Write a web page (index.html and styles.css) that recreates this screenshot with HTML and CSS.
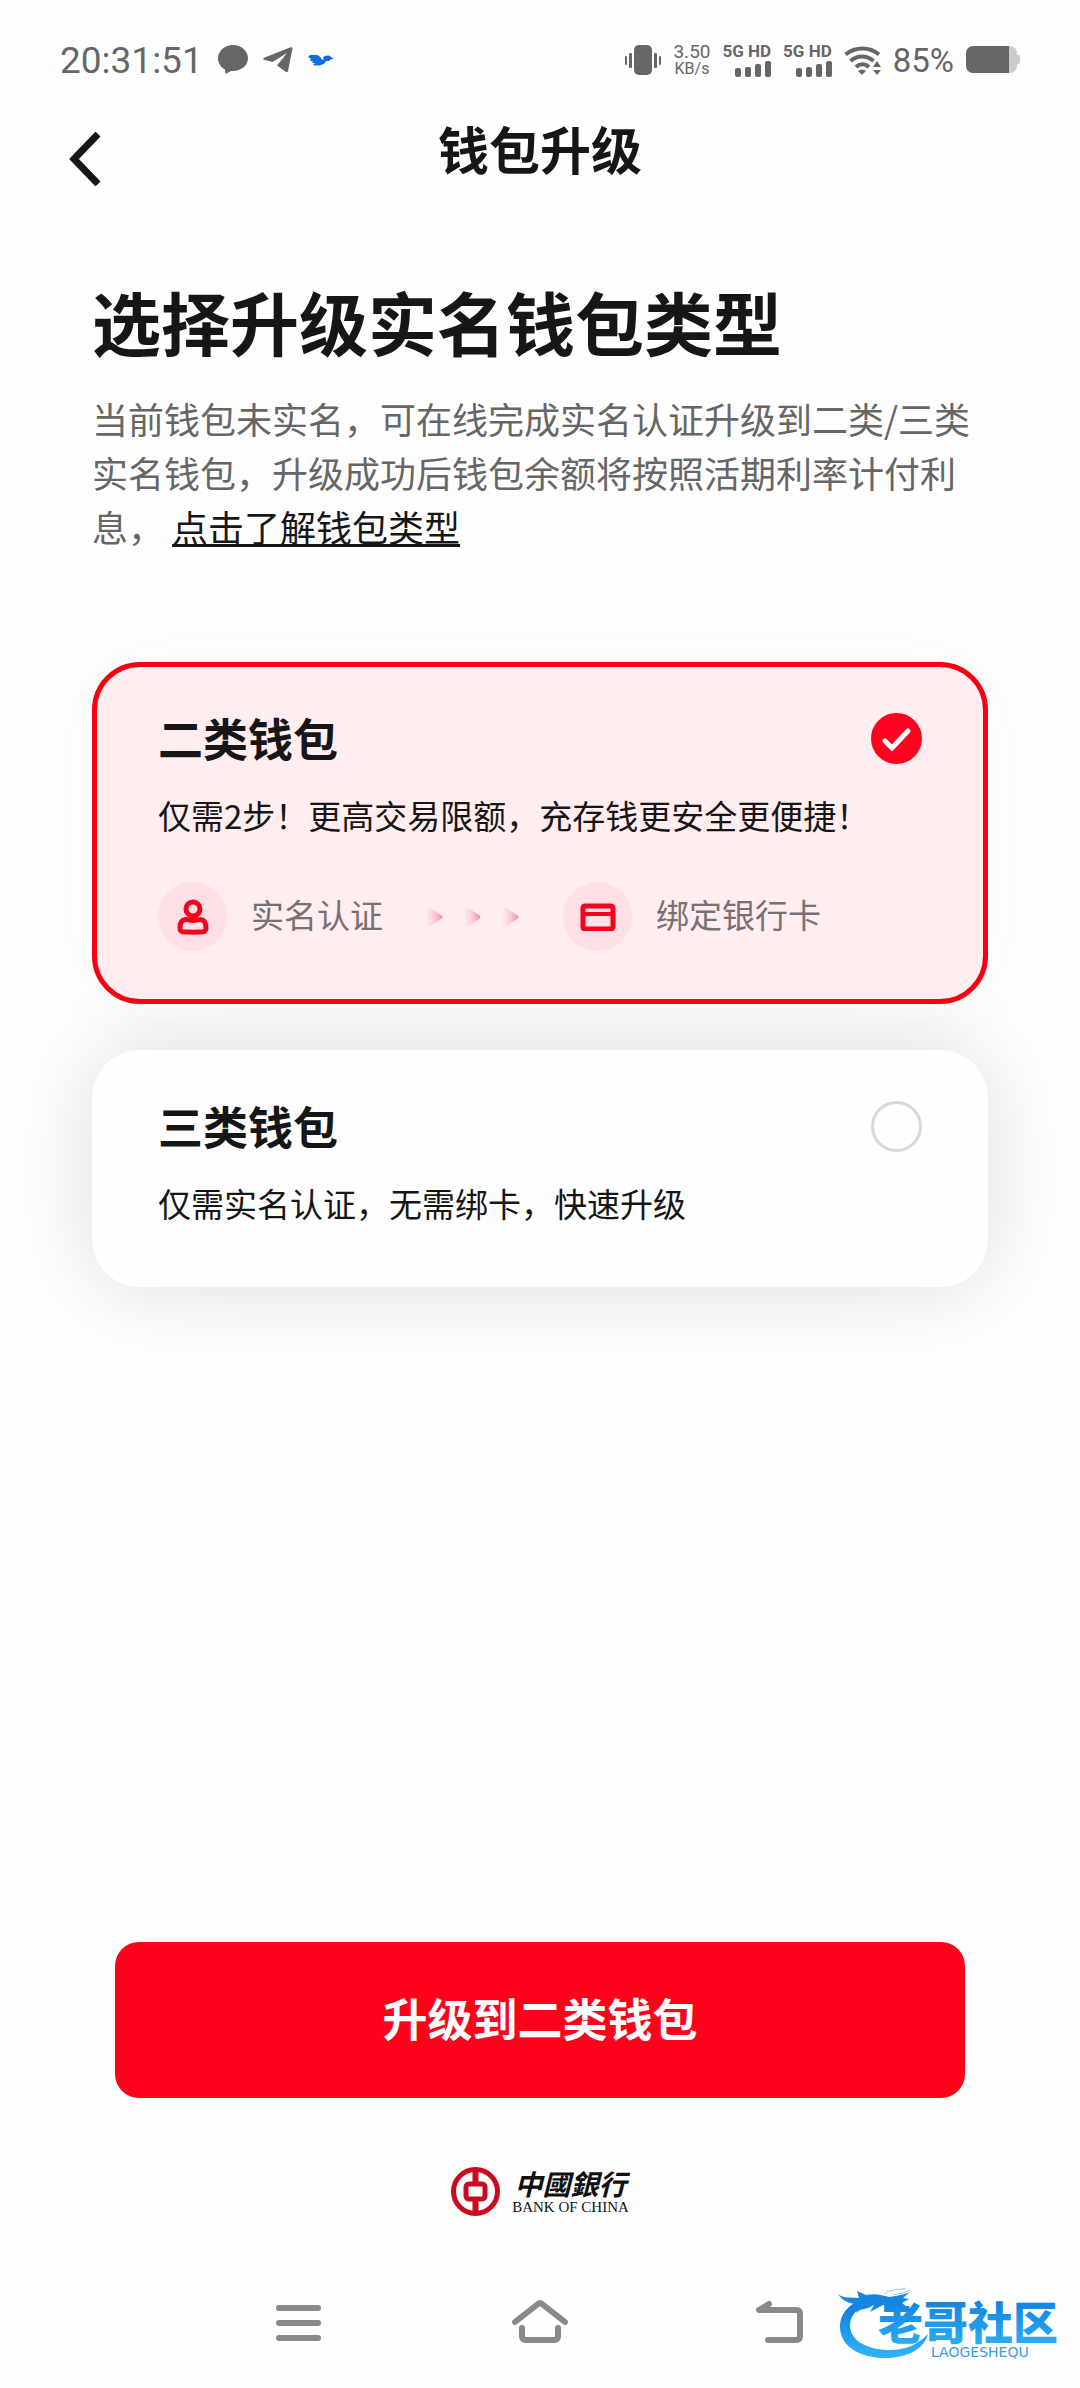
FILE: index.html
```html
<!DOCTYPE html>
<html lang="zh-CN">
<head>
  <meta charset="UTF-8" />
  <meta name="viewport" content="width=device-width, initial-scale=1" />
  <title>钱包升级</title>
  <link rel="stylesheet" href="styles.css">
</head>
<body>
  <div class="status-bar">
    <div class="status-left">
      <span class="clock">20:31:51</span>
      <svg width="30" height="30" viewBox="0 0 30 30"><path d="M15 0C6.700 0 0 6 0 13.500c0 4.600 2.700 8.600 7 11L7.500 29l5.500-3.100c.7.100 1.300.1 2 .1 8.300 0 15-5.600 15-12.700S23.300 0 15 0z" fill="#666"/></svg>
      <svg width="30" height="26" viewBox="0 0 30 26"><path d="M29.500 1.500 25 24c-.3 1.200-1.400 1.400-2.300.8L14 18.600 24 6 9.500 15 1 12.800c-1-.4-1-1.500.2-2L27.500.3c1.300-.4 2.200.1 2 1.200z" fill="#666"/></svg>
      <svg width="26" height="12" viewBox="0 0 26 12"><path d="M0 3 2 1h5c4 0 6 2 7 5l2-1 2 2-1 2c-2 2-8 3.500-12 2L7 9H4l1-2H2l1-2z" fill="#0a6fe0"/><path d="M15 4c2-3 6-3 8-1l3 2-3 .3-2 1.700h-4z" fill="#0a6fe0"/></svg>
    </div>
    <div class="status-right">
      <svg width="36" height="30" viewBox="0 0 36 30" fill="#666"><rect x="9" y="0" width="18" height="30" rx="5"/><rect x="0" y="11" width="2" height="9" rx="1"/><rect x="4" y="8" width="3" height="15" rx="1"/><rect x="29" y="8" width="3" height="15" rx="1"/><rect x="34" y="11" width="2" height="9" rx="1"/></svg>
      <div class="speed"><span>3.50</span><small>KB/s</small></div>
      <div class="signal">
        <span>5G HD</span>
        <svg width="36" height="16" viewBox="0 0 36 16" fill="#666"><rect x="0" y="7" width="6" height="9" rx="2"/><rect x="10" y="6" width="6" height="10" rx="2"/><rect x="20" y="3" width="6" height="13" rx="2"/><rect x="30" y="0" width="6" height="16" rx="2"/></svg>
      </div>
      <div class="signal">
        <span>5G HD</span>
        <svg width="36" height="16" viewBox="0 0 36 16" fill="#666"><rect x="0" y="7" width="6" height="9" rx="2"/><rect x="10" y="6" width="6" height="10" rx="2"/><rect x="20" y="3" width="6" height="13" rx="2"/><rect x="30" y="0" width="6" height="16" rx="2"/></svg>
      </div>
      <svg width="37" height="29" viewBox="0 0 37 29"><path d="M1.500 8.500c10-8 24-8 33.500 0M6.500 15c7-6 16-6 23 0M12 21c4-3.600 9-3.600 13 0" fill="none" stroke="#666" stroke-width="4"/><path d="M14 25c2.500-2 5.500-2 8 0l-4 4z" fill="#666"/><path d="M33 14l5 7v8h-9V19z" fill="#fefefe"/><path d="M33 15l4 6h-8zM33 29l-4-5h8z" fill="#666"/></svg>
      <span class="percent">85%</span>
      <svg width="54" height="28" viewBox="0 0 54 28"><path d="M43 0h1a7 7 0 0 1 7 7v2h1q2 0 2 2v5q0 2-2 2h-1v2a7 7 0 0 1-7 7h-1z" fill="#ccc"/><path d="M43 0v27H7a7 7 0 0 1-7-7V7a7 7 0 0 1 7-7z" fill="#666"/></svg>
    </div>
  </div>

  <header>
    <button type="button" class="back" aria-label="返回">
      <svg width="32" height="54" viewBox="0 0 32 54"><path d="M29 2 5 27l24 25" fill="none" stroke="#161616" stroke-width="7"/></svg>
    </button>
    <h1>钱包升级</h1>
  </header>

  <main>
    <h2>选择升级实名钱包类型</h2>
    <p class="intro">当前钱包未实名，可在线完成实名认证升级到二类/三类实名钱包，升级成功后钱包余额将按照活期利率计付利息， <a href="#">点击了解钱包类型</a></p>

    <div class="wallets">
      <label class="card" for="wallet2">
        <span class="card-head">
          <strong>二类钱包</strong>
          <span class="choice">
            <input type="radio" name="wallet" id="wallet2" checked />
            <svg class="tick" width="51" height="51" viewBox="0 0 51 51"><path d="M14 28l7 7 16-17" fill="none" stroke="#fff" stroke-width="5" stroke-linecap="round"/></svg>
          </span>
        </span>
        <span class="desc">仅需2步！更高交易限额，充存钱更安全更便捷！</span>
        <span class="steps">
          <span class="step-icon">
            <svg width="32" height="36" viewBox="0 0 32 36" fill="none" stroke="#f5001d" stroke-width="5"><circle cx="16" cy="10" r="7"/><path d="M8.500 20.500C11 20 12 21.500 16 21.500s5-1.500 7.500-1C28 21 29 25 29 29c0 3-1 3.500-3 3.800-7 .6-13 .6-20 0-2-.3-3-.8-3-3.800 0-4 1-8 5.500-8.500z"/></svg>
          </span>
          <span class="step-name">实名认证</span>
          <svg class="arrows" width="94" height="24" viewBox="0 0 94 24">
            <defs>
              <linearGradient id="fade"><stop offset="0" stop-color="#ffd9df" stop-opacity="0.300"/><stop offset="1" stop-color="#ff8c9f"/></linearGradient>
            </defs>
            <path d="M1 1l14 9q3 2 0 4L1 23z" fill="url(#fade)"/>
            <path d="M39 1l14 9q3 2 0 4l-14 9z" fill="url(#fade)"/>
            <path d="M77 1l14 9q3 2 0 4l-14 9z" fill="url(#fade)"/>
          </svg>
          <span class="step-icon">
            <svg width="36" height="28" viewBox="0 0 36 28" fill="none" stroke="#f5001d" stroke-width="5"><rect x="3" y="3" width="30" height="23" rx="2"/><path d="M3 11h30" stroke-width="4"/></svg>
          </span>
          <span class="step-name">绑定银行卡</span>
        </span>
      </label>

      <label class="card" for="wallet3">
        <span class="card-head">
          <strong>三类钱包</strong>
          <span class="choice">
            <input type="radio" name="wallet" id="wallet3" />
            <svg class="tick" width="51" height="51" viewBox="0 0 51 51"><path d="M14 28l7 7 16-17" fill="none" stroke="#fff" stroke-width="5" stroke-linecap="round"/></svg>
          </span>
        </span>
        <span class="desc">仅需实名认证，无需绑卡，快速升级</span>
      </label>
    </div>

    <button type="button" class="upgrade" id="upgrade">升级到二类钱包</button>
  </main>

  <div class="bank">
    <svg width="49" height="49" viewBox="0 0 49 49" fill="none" stroke="#cb0a20"><circle cx="24.500" cy="24.500" r="22" stroke-width="5"/><path d="M24.500 3v13M24.500 33v13" stroke-width="6"/><rect x="15" y="17" width="19" height="15" rx="3" stroke-width="5"/></svg>
    <div class="bank-name">
      <span class="bank-cn">中國銀行</span>
      <span class="bank-en">BANK OF CHINA</span>
    </div>
  </div>

  <nav>
    <button type="button" aria-label="菜单"><svg width="60" height="50" viewBox="0 0 60 50"><path d="M9 8h39M9 23h39M9 38h39"/></svg></button>
    <button type="button" aria-label="主页"><svg width="60" height="50" viewBox="0 0 60 50"><path d="M5 22 28 4q2-2 4 0l23 18M12 28v8q0 4 4 4h28q4 0 4-4v-8"/></svg></button>
    <button type="button" aria-label="后退"><svg width="60" height="50" viewBox="0 0 60 50"><path d="M19 4 9 10h37q4 0 4 4v22q0 4-4 4H18"/></svg></button>
  </nav>

  <svg class="watermark" width="230" height="80" viewBox="0 0 230 80">
    <defs>
      <linearGradient id="blue" x1="0" y1="0" x2="0" y2="1"><stop offset="0" stop-color="#0b78d8"/><stop offset="1" stop-color="#2fb4fb"/></linearGradient>
    </defs>
    <path d="M37 13C20 14 5 25 5 42c0 20 22 32 48 31 20-1 36-9 40-24-10 11-25 17-41 16C32 64 15 56 15 40c0-11 10-19 22-22z" fill="url(#blue)"/>
    <path d="M3 9c5 5 14 3 21 4l-2-7 9 4c9-2 16 0 23 2 7-1 14-2 21-5l-7 6 6 1-7 4 6 5c-8-2-12 0-19 0l-6-3-13 7 4-7c-8 5-13 3-18 8l2-8c-8-2-15-3-20-11z" fill="#1686e0"/>
    <path d="M50 9c6-6 12-3 21-6M58 10c6-2 10-1 17-5" fill="none" stroke="#8ac5f0"/>
    <text x="43" y="55" font-size="45" font-weight="900" fill="url(#blue)">老哥社区</text>
    <text class="watermark-en" x="96" y="72" font-size="14" fill="#3b9be4">LAOGESHEQU</text>
  </svg>

  <script>
    const names = { wallet2: "二类钱包", wallet3: "三类钱包" };

    document.querySelectorAll("input[name=wallet]").forEach(function (input) {
      input.addEventListener("change", function () {
        document.getElementById("upgrade").innerText = "升级到" + names[input.id];
      });
    });
  </script>
</body>
</html>
```

FILE: styles.css
```css
* {
  box-sizing: border-box;
}
body {
  font-family: "Noto Sans CJK SC", sans-serif;
  margin: 0;
  min-height: 100vh;
  display: flex;
  flex-direction: column;
  position: relative;
  background-color: #fefefe;
  color: #161616;
}
svg {
  display: block;
  flex: none;
}
button {
  font-family: inherit;
  border: none;
  background: none;
  padding: 0;
  cursor: pointer;
}
.status-bar {
  display: flex;
  justify-content: space-between;
  align-items: center;
  height: 120px;
  padding: 0 60px;
  color: #666;
  font-family: Roboto, sans-serif;
}
.status-left, .status-right {
  display: flex;
  align-items: center;
}
.status-left {
  gap: 15px;
}
.status-right {
  gap: 12px;
}
.clock {
  font-size: 37px;
}
.speed {
  display: flex;
  flex-direction: column;
  align-items: center;
  font-size: 19px;
  line-height: 18px;
}
.speed small {
  font-size: 16px;
  line-height: 16px;
}
.signal {
  display: flex;
  flex-direction: column;
  align-items: flex-end;
  gap: 2px;
  font-size: 17px;
  line-height: 16px;
  font-weight: bold;
}
.percent {
  font-size: 33px;
}
header {
  display: grid;
  grid-template-columns: 1fr auto 1fr;
  align-items: center;
  height: 78px;
  padding: 0 69px;
}
.back {
  justify-self: start;
}
h1 {
  margin: 0;
  align-self: start;
  font-size: 51px;
  line-height: 56px;
}
main {
  flex: 1;
  display: flex;
  flex-direction: column;
  padding: 83px 92px 0;
}
h2 {
  margin: 0 0 30px;
  font-size: 69px;
  line-height: 80px;
}
.intro {
  margin: 0;
  font-size: 36px;
  line-height: 54px;
  color: #666;
}
.intro a {
  color: #161616;
}
.wallets {
  display: flex;
  flex-direction: column;
  gap: 46px;
  margin: 109px 0 60px;
}
.card {
  display: flex;
  flex-direction: column;
  padding: 41px 61px 55px;
  border: 5px solid transparent;
  border-radius: 48px;
  background-color: #fefefe;
  box-shadow: 0 0 90px rgba(0,0,0,0.13);
  cursor: pointer;
}
.card:has(input:checked) {
  position: relative;
  padding-bottom: 48px;
  border-color: #f80012;
  background-color: #ffedef;
  box-shadow: 0 0 90px rgba(200,60,0,0.03);
}
.card-head {
  display: flex;
  justify-content: space-between;
  align-items: center;
  height: 60px;
}
.card-head strong {
  font-size: 45px;
  line-height: 60px;
}
.choice {
  display: grid;
}
.choice input, .tick {
  grid-area: 1 / 1;
}
.choice input {
  appearance: none;
  width: 51px;
  height: 51px;
  margin: 0;
  border: 3px solid #d8d8d8;
  border-radius: 50%;
}
.choice input:checked {
  border-color: #ff0220;
  background-color: #ff0220;
}
.tick {
  visibility: hidden;
  pointer-events: none;
}
input:checked + .tick {
  visibility: visible;
}
.desc {
  margin-top: 23px;
  font-size: 33px;
  line-height: 48px;
}
.steps {
  display: flex;
  align-items: center;
  gap: 24px;
  margin-top: 43px;
  color: #777172;
}
.step-name {
  padding-bottom: 5px;
  font-size: 33px;
  line-height: 48px;
}
.step-icon {
  display: flex;
  align-items: center;
  justify-content: center;
  width: 69px;
  height: 69px;
  border-radius: 50%;
  background-color: #ffe0e6;
}
.arrows {
  margin: 0 19px;
}
.upgrade {
  margin: auto 23px 0;
  height: 156px;
  padding-bottom: 5px;
  border-radius: 24px;
  background-color: #ff021b;
  color: white;
  font-size: 45px;
  font-weight: bold;
}
.bank {
  display: flex;
  justify-content: center;
  align-items: center;
  gap: 12px;
  padding: 69px 0 46px;
}
.bank-name {
  display: flex;
  flex-direction: column;
  align-items: center;
  color: #111;
}
.bank-cn {
  font-size: 28px;
  line-height: 32px;
  font-style: italic;
  font-weight: bold;
}
.bank-en {
  font-family: "Liberation Serif", serif;
  font-size: 15px;
  line-height: 17px;
}
nav {
  display: flex;
  justify-content: center;
  align-items: center;
  gap: 180px;
  height: 126px;
}
nav path {
  fill: none;
  stroke: #898989;
  stroke-width: 6px;
  stroke-linecap: round;
  stroke-linejoin: round;
}
.watermark {
  position: absolute;
  right: 15px;
  bottom: 23px;
  pointer-events: none;
}
.watermark-en {
  font-family: "DejaVu Sans", sans-serif;
}
```
